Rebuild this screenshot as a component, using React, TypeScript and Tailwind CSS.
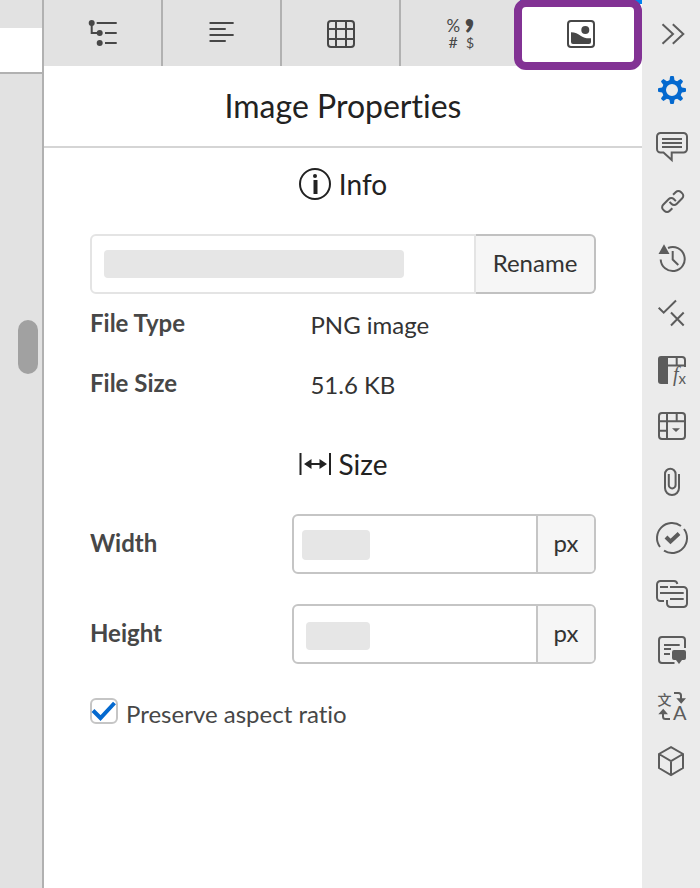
import { useState } from 'react'
import type { ReactNode } from 'react'
import clsx from 'clsx'

type IconProps = { children: ReactNode; className?: string }

function Icon({ children, className }: IconProps) {
  return (
    <svg
      viewBox="0 0 32 32"
      className={clsx('size-8 shrink-0 overflow-visible', className)}
      fill="none"
      stroke="currentColor"
      strokeWidth="2"
      aria-hidden="true"
    >
      {children}
    </svg>
  )
}

const tabs = [
  {
    label: 'Outline',
    icon: (
      <>
        <path d="M4.7 5v10h8M9.7 5h20M18 15h11.7M18 25h11.7" />
        <g fill="currentColor" stroke="none">
          <circle cx="4.7" cy="5" r="3" />
          <circle cx="12.7" cy="15" r="3" />
          <circle cx="12.7" cy="25" r="3" />
        </g>
      </>
    ),
  },
  {
    label: 'Text',
    icon: <path strokeLinecap="round" d="M4.3 5h22.6M4.3 11H19M4.3 17h22.6M4.3 23H19" />,
  },
  {
    label: 'Table',
    icon: (
      <>
        <rect x="3" y="3" width="26" height="26" rx="3" />
        <path d="M11 3v26M21 3v26M3 11h26M3 21h26" />
      </>
    ),
  },
  {
    label: 'Number format',
    icon: (
      <g fill="currentColor" stroke="none" className="font-[Lato]">
        <text x="1.5" y="14" fontSize="17">%</text>
        <text x="3.5" y="30" fontSize="16">#</text>
        <text x="21" y="30" fontSize="14">$</text>
        <text x="19" y="8" fontSize="46" fontWeight="900">,</text>
      </g>
    ),
  },
  {
    label: 'Image',
    icon: (
      <>
        <rect x="3" y="3" width="26" height="26" rx="3" />
        <g fill="currentColor" stroke="none">
          <circle cx="20.3" cy="12" r="4" />
          <path d="M6 14.2c4 0 7 1.6 10 3.8 3 2 6 2.6 10 2.2V24a2 2 0 0 1-2 2H8a2 2 0 0 1-2-2z" />
        </g>
      </>
    ),
  },
]

const tools = [
  { label: 'Collapse panel', icon: <path d="M6.5 6.2 17 16 6.5 25.8M16.8 6.2l10.5 9.8-10.5 9.8" /> },
  {
    label: 'Properties',
    icon: (
      <>
        <circle cx="16" cy="16" r="8" strokeWidth="4" />
        <g fill="currentColor" stroke="none">
          {[0, 45, 90, 135, 180, 225, 270, 315].map((angle) => (
            <path
              key={angle}
              transform={`rotate(${angle} 16 16)`}
              d="M14 3q0-1 1-1h2q1 0 1 1l.5 3.200 1.600 1.300h-8.200l1.600-1.300z"
            />
          ))}
        </g>
      </>
    ),
  },
  {
    label: 'Comments',
    icon: (
      <path d="M4.5 3h23A3.5 3.5 0 0 1 31 6.5V19a3.5 3.5 0 0 1-3.5 3.5H15.7V30l-8.2-7.5h-3A3.5 3.5 0 0 1 1 19V6.5A3.5 3.5 0 0 1 4.5 3zM6 9h20M6 13h20M6 17h20" />
    ),
  },
  {
    label: 'Links',
    icon: (
      <g transform="translate(16.7 15.5) rotate(-45)">
        <path d="M5-4.5h4A3.5 3.5 0 0 1 12.5-1v2A3.5 3.5 0 0 1 9 4.5H1A3.5 3.5 0 0 1-2.5 1v-3" />
        <path d="M-5 4.5h-4A3.5 3.5 0 0 1-12.5 1v-2A3.5 3.5 0 0 1-9-4.5h8A3.5 3.5 0 0 1 2.5-1v3" />
      </g>
    ),
  },
  {
    label: 'History',
    icon: (
      <>
        <path d="M4.7 17.5A12 12 0 1 0 12 6M16.7 9v8.500l5.600 5.500" />
        <path d="M2.5 12 8 2.3 13.5 12z" fill="currentColor" stroke="none" />
      </>
    ),
  },
  { label: 'Checks', icon: <path d="m2.7 9.7 5 5L20 2.5M15 14.5l12.7 13M27.7 14.5 15 27.500" /> },
  {
    label: 'Formulas',
    icon: (
      <>
        <path d="M12 3h14a3 3 0 0 1 3 3v7M12 11.5h16M20.7 3v8" />
        <path d="M5 2h7v28H5a3 3 0 0 1-3-3V5a3 3 0 0 1 3-3z" fill="currentColor" stroke="none" />
        <g fill="currentColor" stroke="none">
          <text x="17" y="27" fontSize="20" fontStyle="italic" className="font-['Liberation_Serif']">f</text>
          <text x="22.5" y="30" fontSize="15" className="font-[Lato]">x</text>
        </g>
      </>
    ),
  },
  {
    label: 'Tables',
    icon: (
      <>
        <rect x="3" y="3" width="26" height="26" rx="3" />
        <path d="M3 11.3h26M11 3v26M20.7 3v8M3 20.7h8" />
        <path d="M16 18.3h8L20 22z" fill="currentColor" stroke="none" />
      </>
    ),
  },
  {
    label: 'Attachments',
    icon: <path d="M23 8v14a7 7 0 0 1-14 0V8a5.300 5.300 0 0 1 10.600 0v11a3.400 3.400 0 0 1-6.800 0V8" />,
  },
  {
    label: 'Tasks',
    icon: (
      <>
        <path d="M25 4A15 15 0 0 0 4 25M28 7A15 15 0 0 1 8 28.7" />
        <path d="m10 15 4.5 4.5 8.5-8" strokeWidth="4" />
      </>
    ),
  },
  {
    label: 'Conversations',
    icon: (
      <path d="M8 23H4.5A3.5 3.5 0 0 1 1 19.5v-13A3.5 3.5 0 0 1 4.5 3H18a3.5 3.5 0 0 1 3.3 3M14 9h13.500a3.500 3.500 0 0 1 3.500 3.500v13a3.500 3.500 0 0 1-3.500 3.500H14.500a3.500 3.500 0 0 1-3.500-3.500V22M4 9h8M4 15h23.700M14 21h13.700" />
    ),
  },
  {
    label: 'Notes',
    icon: (
      <>
        <path d="M29 14V6a3 3 0 0 0-3-3H6a3 3 0 0 0-3 3v20a3 3 0 0 0 3 3h12.500M8 11h15.700M8 15h7M8 20h6" />
        <path
          d="M18 16h10a2 2 0 0 1 2 2v6a2 2 0 0 1-2 2h-2l-3 4-3-4h-2a2 2 0 0 1-2-2v-6a2 2 0 0 1 2-2z"
          fill="currentColor"
          stroke="none"
        />
      </>
    ),
  },
  {
    label: 'Translate',
    icon: (
      <>
        <path d="M18 3h4.500a2.500 2.500 0 0 1 2.500 2.500V9M14 29H9.500A2.500 2.500 0 0 1 7 26.500V23" />
        <g fill="currentColor" stroke="none">
          <path d="M20.3 8.3H30l-4.800 5.400zM2.300 24.300H12l-4.800-5.600z" />
          <text x="1.5" y="14.5" fontSize="14" fontWeight="500" className="font-['Noto_Sans_CJK_SC']">文</text>
          <text x="17" y="30" fontSize="20" className="font-[Lato]">A</text>
        </g>
      </>
    ),
  },
  { label: 'Packages', icon: <path d="M15 1.2 27 8v14l-12 7L3 22V8zM3 8l12 7 12-7M15 15v14" /> },
]

function SectionHeading({ icon, children }: { icon: ReactNode; children: ReactNode }) {
  return (
    <h2 className="flex items-center justify-center gap-2 text-[28px] leading-9 text-[#222]">
      {icon}
      {children}
    </h2>
  )
}

function InfoRow({ label, value }: { label: string; value: string }) {
  return (
    <div className="grid h-15 grid-cols-[2fr_3fr] items-center">
      <dt className="pb-0.5 font-bold text-[#474747]">{label}</dt>
      <dd className="pt-0.5 pl-[18px]">{value}</dd>
    </div>
  )
}

function SizeRow({ id, label, maskClass }: { id: string; label: string; maskClass: string }) {
  return (
    <div className="grid grid-cols-[2fr_3fr] items-center">
      <label htmlFor={id} className="pb-0.5 font-bold text-[#474747]">
        {label}
      </label>
      <div className="relative flex h-15 overflow-hidden rounded-md border-2 border-[#c5c5c5] bg-white">
        <input id={id} type="text" className="w-0 flex-1 px-3 outline-none" />
        <span className={clsx('pointer-events-none absolute rounded bg-[#e6e6e6]', maskClass)} />
        <span className="flex w-[58px] items-center justify-center border-l-2 border-[#c5c5c5] bg-[#f6f6f6] pb-0.5">
          px
        </span>
      </div>
    </div>
  )
}

function App() {
  const [activeTab, setActiveTab] = useState('Image')
  const [preserve, setPreserve] = useState(true)

  return (
    <div className="flex min-h-screen bg-white font-[Lato,sans-serif] text-2xl text-[#333] [font-variant-ligatures:none]">
      {/* Edge of the document with its scrollbar */}
      <div className="flex w-11 shrink-0 flex-col border-r-2 border-[#b1b1b1] bg-[#e2e2e2]">
        <div className="mt-7 h-[46px] border-b-2 border-[#b1b1b1] bg-white" />
        <div className="mt-[246px] mr-1 h-[54px] w-5 self-end rounded-full bg-[#a1a1a1]" />
      </div>

      <main className="min-w-0 flex-1">
        <div
          role="tablist"
          className="grid h-[66px] grid-cols-[repeat(4,119fr)_122fr] bg-[#e2e2e2] text-[#474747]"
        >
          {tabs.map(({ label, icon }, i) => {
            const active = label === activeTab
            return (
              <button
                key={label}
                type="button"
                role="tab"
                aria-label={label}
                aria-selected={active}
                onClick={() => setActiveTab(label)}
                className={clsx(
                  'relative flex items-center justify-center pt-0.5',
                  i < 3 && 'border-r-2 border-[#b1b1b1]',
                  active && 'bg-white',
                )}
              >
                {active && (
                  <>
                    <span className="absolute inset-x-0 top-0 h-1 bg-[#0082f0]" />
                    <span className="absolute -top-px right-0 -left-1.5 h-[71px] rounded-xl border-8 border-[#823294]" />
                  </>
                )}
                <Icon>{icon}</Icon>
              </button>
            )
          })}
        </div>

        <h1 className="flex h-[82px] items-center justify-center border-b-2 border-[#d5d5d5] text-[32px] text-[#222]">
          Image Properties
        </h1>

        <div className="px-[46px] pt-[18px] pb-8">
          <SectionHeading
            icon={
              <Icon>
                <circle cx="16" cy="16" r="15" />
                <circle cx="16" cy="8" r="2" fill="currentColor" stroke="none" />
                <path d="M16.5 12v14" strokeWidth="4" />
              </Icon>
            }
          >
            Info
          </SectionHeading>

          <form className="relative mt-8 flex h-15" onSubmit={(e) => e.preventDefault()}>
            <input
              type="text"
              aria-label="File name"
              className="w-0 flex-1 rounded-l-md border-2 border-[#e4e4e4] px-3 outline-none"
            />
            <span className="pointer-events-none absolute top-4 left-3.5 h-7 w-[300px] rounded bg-[#e6e6e6]" />
            <button
              type="submit"
              className="w-30 rounded-r-md border-2 border-l-0 border-[#c1c1c1] bg-[#f6f6f6] pb-0.5"
            >
              Rename
            </button>
          </form>

          <dl>
            <InfoRow label="File Type" value="PNG image" />
            <InfoRow label="File Size" value="51.6 KB" />
          </dl>

          <div className="py-8">
            <SectionHeading
              icon={
                <Icon>
                  <path d="M1.5 5v22M31 5v22M9 16h15" />
                  <path d="m5 16 7.5-5v10zM28 16l-7.500-5v10z" fill="currentColor" stroke="none" />
                </Icon>
              }
            >
              Size
            </SectionHeading>
          </div>

          <div className="flex flex-col gap-[30px]">
            <SizeRow id="width" label="Width" maskClass="top-3.5 left-2 h-[30px] w-[68px]" />
            <SizeRow id="height" label="Height" maskClass="top-4 left-3 h-7 w-16" />
          </div>

          <div className="mt-8 flex gap-2">
            <span className="relative mt-0.5 h-[26px] w-7 shrink-0">
              <input
                id="preserve"
                type="checkbox"
                checked={preserve}
                onChange={(e) => setPreserve(e.target.checked)}
                className="block h-full w-full appearance-none rounded-md border-2 border-[#c5c5c5] bg-white"
              />
              {preserve && (
                <svg viewBox="0 0 28 26" className="pointer-events-none absolute inset-0 text-[#0469cf]" aria-hidden="true">
                  <path d="m3 12.5 7.500 7.500L24.500 5" fill="none" stroke="currentColor" strokeWidth="4" />
                </svg>
              )}
            </span>
            <label htmlFor="preserve" className="pt-0.5 text-[#474747]">
              Preserve aspect ratio
            </label>
          </div>
        </div>
      </main>

      <nav aria-label="Tools" className="flex w-[58px] shrink-0 flex-col bg-[#ebebeb] pt-1.5 pl-0.5 text-[#5c5c5c]">
        {tools.map(({ label, icon }) => (
          <button key={label} type="button" aria-label={label} className="flex h-14 items-center justify-center">
            <Icon className={clsx(label === 'Properties' && 'text-[#0469cf]')}>{icon}</Icon>
          </button>
        ))}
      </nav>
    </div>
  )
}

export default App
